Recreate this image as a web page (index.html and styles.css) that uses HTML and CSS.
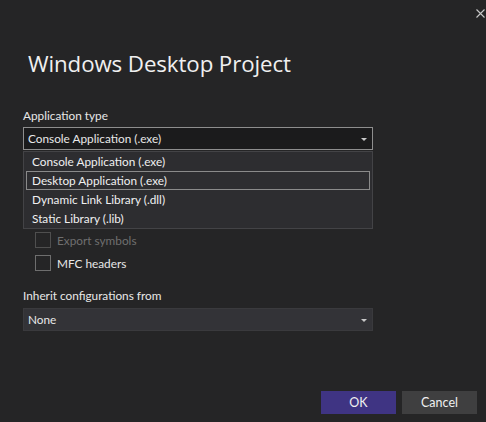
FILE: index.html
```html
<!DOCTYPE html>
<html>
<head>
<meta charset="utf-8">
<link rel="stylesheet" href="styles.css">
</head>
<body>
<div class="dialog">
  <div class="close" aria-label="Close">
    <svg width="9" height="9" viewBox="0 0 9 9"><path d="M0.5 0.5L8.5 8.5M8.5 0.5L0.5 8.5" stroke="#c8c8c8" stroke-width="1.1" fill="none"/></svg>
  </div>
  <h1 class="title">Windows Desktop Project</h1>
  <div class="content">
    <div class="label">Application type</div>
    <div class="combo-wrap">
      <div class="combo combo-open">
        <span>Console Application (.exe)</span>
        <span class="arrow"></span>
      </div>
      <div class="dropdown">
        <div class="item">Console Application (.exe)</div>
        <div class="item selected">Desktop Application (.exe)</div>
        <div class="item">Dynamic Link Library (.dll)</div>
        <div class="item">Static Library (.lib)</div>
      </div>
    </div>
    <div class="options">
      <label class="check disabled"><span class="box"></span><span>Export symbols</span></label>
      <label class="check"><span class="box"></span><span>MFC headers</span></label>
    </div>
    <div class="label label2">Inherit configurations from</div>
    <div class="combo combo-closed">
      <span>None</span>
      <span class="arrow"></span>
    </div>
  </div>
  <div class="footer">
    <button class="btn primary">OK</button>
    <button class="btn">Cancel</button>
  </div>
</div>
</body>
</html>
```
FILE: styles.css
```css
* { box-sizing: border-box; }
html, body { margin: 0; padding: 0; }
body {
  background: #252526;
  color: #e8e8e8;
  font-family: Lato, "Noto Sans", sans-serif;
  font-size: 11.8px;
}
.dialog {
  position: relative;
  width: 486px;
  height: 422px;
  display: flex;
  flex-direction: column;
  padding: 0 9px 8px 23px;
}
.close {
  position: absolute;
  top: 9px;
  right: 1px;
  width: 9px;
  height: 9px;
  line-height: 0;
}
.title {
  margin: 49px 0 0 5px;
  font-family: "Open Sans", "Noto Sans", sans-serif;
  font-weight: 400;
  font-size: 22.3px;
  line-height: 30px;
  color: #f0f0f0;
  letter-spacing: -0.1px;
}
.content {
  width: 350px;
  margin-top: 29px;
}
.label {
  line-height: 16px;
}
.combo-wrap {
  position: relative;
  margin-top: 3px;
}
.combo {
  height: 23px;
  display: flex;
  align-items: center;
  justify-content: space-between;
  padding: 0 5px 0 4px;
}
.combo-open {
  background: #1b1b1c;
  border: 1px solid #8e8e8e;
}
.combo-closed {
  background: #333337;
  border: 1px solid #3a3a3d;
  margin-top: 4px;
}
.arrow {
  width: 0;
  height: 0;
  border-left: 3px solid transparent;
  border-right: 3px solid transparent;
  border-top: 3px solid #c8c8c8;
  margin-top: 1px;
}
.dropdown {
  position: absolute;
  top: 24px;
  left: 0;
  width: 350px;
  height: 78px;
  background: #2d2d30;
  border: 1px solid #434346;
  padding: 0 2px;
}
.item {
  height: 19px;
  line-height: 17px;
  padding-left: 5px;
  border: 1px solid transparent;
  color: #f0f0f0;
}
.selected {
  border-color: #8a8a8a;
}
.options {
  display: flex;
  flex-direction: column;
  gap: 7px;
  margin: 82px 0 0 12px;
}
.check {
  display: flex;
  align-items: center;
  gap: 6px;
  height: 16px;
}
.box {
  width: 16px;
  height: 16px;
  border: 1px solid #6e6e6e;
  background: #252526;
}
.disabled { color: #6f6f6f; }
.disabled .box { border-color: #4f4f4f; }
.label2 { margin-top: 17px; }
.footer {
  margin-top: auto;
  display: flex;
  justify-content: flex-end;
  gap: 6px;
}
.btn {
  width: 75px;
  height: 23px;
  border: none;
  background: #3f3f40;
  color: #f0f0f0;
  font-family: Lato, "Noto Sans", sans-serif;
  font-size: 12.5px;
  padding: 0;
}
.primary { background: #3f3483; }
```
